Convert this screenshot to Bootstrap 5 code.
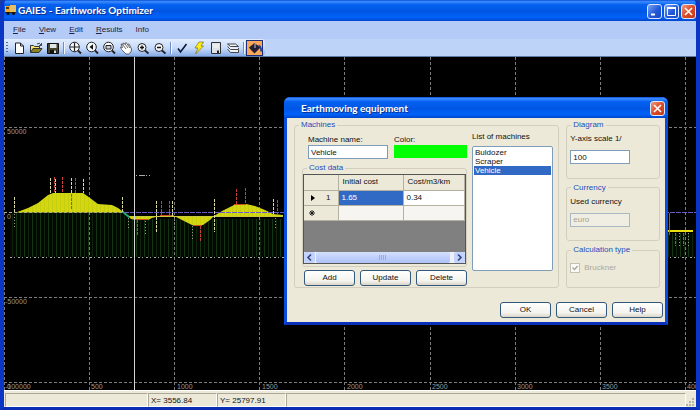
<!DOCTYPE html>
<html lang="en">
<head>
<meta charset="utf-8">
<meta name="viewport" content="width=device-width, initial-scale=1">
<title>GAIES - Earthworks Optimizer</title>
<link href="https://cdn.jsdelivr.net/npm/bootstrap@5.3.0/dist/css/bootstrap.min.css" rel="stylesheet">
<style>
body{font-family:"Liberation Sans",Arial,sans-serif;font-size:8px;line-height:10px;color:#111;background:#1c3f9e}
button,input{font:inherit;color:inherit}
.app-frame{background:#0a3fd0;border:solid #0b35c4;border-width:0 4px 3px 4px;border-radius:6px 6px 0 0;border-bottom-color:#0a2db4}
.xp-title{background:linear-gradient(#0a4fd8 0,#3c8cff 8%,#0561f0 22%,#0056e4 55%,#0062fa 82%,#0046cc 100%);color:#fff;font-family:Lato,"Open Sans",sans-serif;font-weight:700;font-size:10px;line-height:14px}
.app-title{height:21px;margin:0 -4px;padding:3px 4px 0 5px;border-radius:6px 6px 0 0}
.title-text{text-shadow:1px 1px 0 #0a2f90}
.app-title .title-text{margin-left:1px}
.cap-group{gap:2px;margin-top:1px}
.cap-btn{width:15px;height:15px;border:1px solid #dce8ff;border-radius:3px;padding:0;background:linear-gradient(135deg,#7ba4f5,#2258d8 55%,#1c4ac4);display:block}
.cap-btn.shut{background:linear-gradient(135deg,#f09a80,#dd4c26 50%,#c23a16)}
.cap-btn svg{display:block;width:13px;height:13px}
.menu-strip{background:#b4cbf7;height:18px;padding:4px 9px;gap:13px}
.menu-strip a{color:#1b2340;text-decoration:none}
.menu-strip u{text-decoration-thickness:1px;text-underline-offset:1px}
.tool-row{background:#bed3f8;height:18px;border-bottom:1px solid #5f7ba8}
.tool-strip{background:linear-gradient(#e2edfe,#c5d9fa 55%,#86abe6);border-radius:0 4px 4px 0;padding:0 2px 0 1px}
.grip{width:5px;height:12px;background:repeating-linear-gradient(#50699c 0 1px,transparent 1px 3px) 1px 0/2px 100% no-repeat}
.tool-btn{width:17px;height:16px;padding:0;border:1px solid transparent;background:none;display:flex;align-items:center;justify-content:center}
.tool-btn svg{width:14px;height:14px;flex:none}
.tool-btn.on{background:#fba75a;border-color:#1c2f7c}
.tool-sep{width:5px;height:12px;background:linear-gradient(90deg,transparent 2px,#6f8ec4 2px 3px,#f3f8ff 3px 4px,transparent 4px)}
.plot{background:#000;min-height:0}
.plot-svg{width:100%;min-height:0}
.status{background:#ece9d8;height:17px;border-top:1px solid #fff;padding:2px 2px 1px 1px}
.status-cell{border:1px solid;border-color:#aca899 #fff #fff #aca899;height:14px;padding:1px 2px;line-height:11px}
.cell-wide{width:143px}
.cell-pos{width:69px}
.equip{left:280px;top:40px;width:384px;background:#ece9d8;border:solid #0a4be0;border-width:0 3px 3px;border-bottom-color:#0b2fb8;border-radius:6px 6px 0 0}
.equip-title{height:21px;margin:0 -3px;padding:4px 3px 0 17px;border-radius:6px 6px 0 0}
.equip-body{padding:2px 5px 4px 7px}
.panes{gap:7px}
.group{border:1px solid #d2cfbe;border-radius:3px;padding:0;margin:0;min-width:0}
.group legend{float:none;width:auto;font-size:8px;line-height:10px;color:#1a4fbe;margin:0 0 0 4px;padding:0 2px}
.machines{width:266px}
.machines-in{padding:5px 6px 1px 7px;gap:5px}
.left-col{width:166px}
.left-col .group{margin-top:4px}
.side{gap:4px;width:94px}
.side-in{padding:4px 3px}
.xp-field{border:1px solid #7f9db9;border-radius:0;background:#fff;height:14px;padding:0 2px;width:80px;display:block}
.side .xp-field{width:60px;margin-top:6px}
.xp-field:disabled{background:#f0eee2;color:#a5a294;border-color:#a9b9c4}
.swatch{width:73px;height:13px;border:0;padding:0;background:#0f0;display:block}
.names{gap:6px;padding-left:6px}
.lists{width:81px;margin-top:-3px}
.machine-list{border:1px solid #7f9db9;background:#fff;height:125px;margin-top:4px;padding:1px;width:81px;font:inherit;display:block;overflow:hidden;outline:0}
.machine-list option{padding:0 1px;min-height:0;line-height:9px;color:#111}
.machine-list option:checked{background:#316ac5 linear-gradient(#316ac5,#316ac5);color:#fff}
.cost-box{border:1px solid #555;background:#808080;margin:1px 0 2px}
.cost-table{width:100%;table-layout:fixed;border-collapse:collapse;background:#fff}
.cost-table .col-mark{width:34px}
.cost-table .col-initial{width:65px}
.cost-table th,.cost-table td{height:15px;padding:0 3px;border:solid #b4b0a2;border-width:0 1px 1px 0;font-weight:400;line-height:10px;vertical-align:middle}
.cost-table thead th{background:#ece9d8;padding-left:4px}
.cost-table tbody th{background:#ece9d8}
.cost-table td.picked{background:#316ac5;color:#fff}
.cost-table .blank td{background:#f6f5f2}
.hscroll{height:11px;background:#eef0fb;margin-top:31px}
.scroll-btn{width:11px;height:11px;border:0;border-radius:2px;padding:0;background:#c3d3fd;display:block}
.scroll-btn svg{display:block;width:11px;height:11px}
.thumb{background:linear-gradient(#d3dffe,#bccdfb 60%,#aec2f6);border-radius:2px;margin:0 4px 0 1px}
.xp-btn{height:16px;width:51px;border:1px solid #34577c;border-radius:3px;background:linear-gradient(#fff,#f4f3ee 70%,#d9d5c8);padding:0;line-height:12px}
.small-row{gap:5px;margin:3px 0 0 2px}
.foot{gap:5px;margin:14px -3px 0 0}
.tick{appearance:none;width:10px;height:10px;margin:0;border:1px solid #c4c1b2;background:#fbfaf6 url("data:image/svg+xml,%3Csvg xmlns='http://www.w3.org/2000/svg' viewBox='0 0 8 8'%3E%3Cpath d='M1.5 3.5l2 2L6.700 2' fill='none' stroke='%23aaa796' stroke-width='1.400'/%3E%3C/svg%3E")}
.tick-row{gap:4px;color:#aca899;padding-top:4px}
</style>
<script src="https://cdn.jsdelivr.net/npm/bootstrap@5.3.0/dist/js/bootstrap.bundle.min.js"></script>
</head>
<body>
<div class="app-frame vh-100 d-flex flex-column overflow-hidden">
  <header class="xp-title app-title d-flex align-items-start">
    <svg width="12" height="14" viewBox="0 0 12 14"><path d="M0 3h5v6H0z" fill="#f5a623"/><path d="M5 2h6v7H5z" fill="#e9bd62"/><path d="M1 4h3v2H1z" fill="#553c14"/><path d="M0 9h11v1H0z" fill="#3a2505"/><circle cx="3" cy="10.500" r="1.500" fill="#111"/><circle cx="8.500" cy="10.500" r="1.500" fill="#111"/></svg>
    <span class="title-text">GAIES - Earthworks Optimizer</span>
    <div class="cap-group ms-auto d-flex">
      <button class="cap-btn" aria-label="Minimize"><svg viewBox="0 0 13 13"><path d="M3 9.500h4" stroke="#fff" stroke-width="2"/></svg></button>
      <button class="cap-btn" aria-label="Maximize"><svg viewBox="0 0 13 13"><path d="M2.500 3v7.500h8V3" fill="none" stroke="#fff"/><path d="M2 3h9" stroke="#fff" stroke-width="2"/></svg></button>
      <button class="cap-btn shut" aria-label="Close"><svg viewBox="0 0 13 13"><path d="M3 3l7 7M10 3l-7 7" stroke="#fff" stroke-width="1.600"/></svg></button>
    </div>
  </header>
  <nav class="menu-strip d-flex">
    <a href="#"><u>F</u>ile</a><a href="#"><u>V</u>iew</a><a href="#"><u>E</u>dit</a><a href="#"><u>R</u>esults</a><a href="#">Info</a>
  </nav>
  <div class="tool-row d-flex">
    <div class="tool-strip d-flex align-items-center">
      <span class="grip"></span>
      <button class="tool-btn" aria-label="New"><svg viewBox="0 0 14 14"><path d="M3.500 2h5l3 3v7.500h-8z" fill="#fff" stroke="#222"/><path d="M8.500 2v3h3" fill="none" stroke="#222"/></svg></button>
      <button class="tool-btn" aria-label="Open"><svg viewBox="0 0 14 14"><path d="M1.500 11.500v-7h3l1 1h5v2" fill="#f5e36a" stroke="#333"/><path d="M1.500 11.500l2.500-4h9l-3 4z" fill="#8c8420" stroke="#333"/><path d="M8 3q2.500-2 4 1M12.500 2v2.500H10" fill="none" stroke="#222" stroke-width=".8"/></svg></button>
      <button class="tool-btn" aria-label="Save"><svg viewBox="0 0 14 14"><path d="M1.500 2.500h11v10h-11z" fill="#43462c" stroke="#111"/><path d="M4 3h6.500v4H4z" fill="#dfe6e8"/><path d="M4 9h6.500v3.500H4z" fill="#111"/><path d="M8 9.500h2V12H8z" fill="#ddd"/></svg></button>
      <span class="tool-sep"></span>
      <button class="tool-btn" aria-label="Zoom all"><svg viewBox="0 0 14 14"><circle cx="6.500" cy="6" r="4.800" fill="#f5faff" stroke="#222"/><path d="M6.500 1.500v9M2 6h9" stroke="#222" stroke-width="1.200"/><path d="M10 9.500l3 3" stroke="#222" stroke-width="1.800"/></svg></button>
      <button class="tool-btn" aria-label="Zoom previous"><svg viewBox="0 0 14 14"><circle cx="6.500" cy="6" r="4.800" fill="#f5faff" stroke="#222"/><path d="M8 3.300v5.400L4.500 6z" fill="#111"/><path d="M10 9.500l3 3" stroke="#222" stroke-width="1.800"/></svg></button>
      <button class="tool-btn" aria-label="Zoom window"><svg viewBox="0 0 14 14"><circle cx="6.500" cy="6" r="4.800" fill="#f5faff" stroke="#222"/><path d="M4 4.500h5v3.500H4z" fill="#ccd" stroke="#222"/><path d="M10 9.500l3 3" stroke="#222" stroke-width="1.800"/></svg></button>
      <button class="tool-btn" aria-label="Pan"><svg viewBox="0 0 14 14"><path d="M2 3l2 1 0-2 2 1 1-1.500 1.500 2L10 3l2.500 5-.5 3-2.500 2H7L2.500 8.500 1.500 6l2 .5z" fill="#fff" stroke="#444" stroke-width=".8"/><path d="M4 4l3 4M6 3l3 4M8.500 3.500L11 7" stroke="#444" stroke-width=".8"/></svg></button>
      <button class="tool-btn" aria-label="Zoom in"><svg viewBox="0 0 14 14"><circle cx="6" cy="6.500" r="4" fill="#f5faff" stroke="#222"/><path d="M6 4.500v4M4 6.500h4" stroke="#111" stroke-width="1.400"/><path d="M9 9.500l3.500 3" stroke="#222" stroke-width="1.800"/></svg></button>
      <button class="tool-btn" aria-label="Zoom out"><svg viewBox="0 0 14 14"><circle cx="6" cy="6.500" r="4" fill="#f5faff" stroke="#222"/><path d="M4 6.500h4" stroke="#111" stroke-width="1.400"/><path d="M9 9.500l3.500 3" stroke="#222" stroke-width="1.800"/></svg></button>
      <span class="tool-sep"></span>
      <button class="tool-btn" aria-label="Check"><svg viewBox="0 0 14 14"><path d="M3 7.500l2.500 3.500L11.500 3" fill="none" stroke="#0c1630" stroke-width="1.600"/></svg></button>
      <button class="tool-btn" aria-label="Calculate"><svg viewBox="0 0 14 14"><path d="M7 1h4.500L9 5h2.500L3.500 13l2.500-6H3z" fill="#ffee1a" stroke="#77701c" stroke-width=".7"/></svg></button>
      <button class="tool-btn" aria-label="Sheet"><svg viewBox="0 0 14 14"><path d="M2.500 1.500h9v11h-9z" fill="#dde2e8" stroke="#333"/><path d="M8 9.500h2V12H8z" fill="#222"/><path d="M4 4h6M4 6h6" stroke="#f8f8f8"/></svg></button>
      <button class="tool-btn" aria-label="Layers"><svg viewBox="0 0 14 14"><path d="M1.500 3h8l3 2.500h-8zM1.500 5.500l3 3h8V7M1.500 8l3 3.500h8V9" fill="#eef2f6" stroke="#333" stroke-width=".9"/></svg></button>
      <span class="tool-sep"></span>
      <button class="tool-btn on" aria-label="Equipment"><svg viewBox="0 0 14 14"><path d="M1 6.500L6.500 2l6 4.500-6 6L3 9z" fill="#251e30"/><path d="M7 7V2.500" stroke="#c8c4d0"/><path d="M10.500 4.500q3 1 2.500 6" fill="none" stroke="#2a3e96" stroke-width="1.800"/></svg></button>
    </div>
  </div>
  <main class="plot flex-fill d-flex position-relative">
    <svg class="plot-svg" viewBox="4 57 692 333" preserveAspectRatio="xMinYMin slice" role="img" aria-label="Mass haul diagram">
      <defs>
        <pattern id="hatch" x="8" y="0" width="8" height="8" patternUnits="userSpaceOnUse"><path d="M.5 0v8" stroke="#123512"/><path d="M4.500 0v8" stroke="#0e230c"/></pattern>
        <pattern id="soil" width="4" height="4" patternUnits="userSpaceOnUse"><path d="M0 0h4v4H0z" fill="#d6d60e"/><path d="M.5 0v4" stroke="#c6d010"/></pattern>
      </defs>
      <path d="M10 213h114l12 6h147v38H10zM668 233h26v24h-26z" fill="#040904"/>
      <path d="M10 213h114l12 6h147v38H10zM668 233h26v24h-26z" fill="url(#hatch)"/>
      <g stroke="#7c7c7c" stroke-dasharray="3 2" fill="none">
        <path d="M4.500 57v333M89.500 57v333M174.500 57v333M259.500 57v333M344.500 57v333M430.500 57v333M515.500 57v333M600.500 57v333M685.500 57v333"/>
        <path d="M4 127.500h692M4 297.500h692M4 382.500h692"/>
      </g>
      <path d="M10 257.500h686" stroke="#aaa" stroke-dasharray="2 2 1 3"/>
      <path d="M16 212.500L28 208 38 203 48 195 53 193H83L90 198 98 204 112 205 118 208 124 212.500z" fill="url(#soil)"/>
      <path d="M128 216h32l-8 2-4 2h-12l-5-1zM174 216h40l-4 4-7 5h-11l-6-3zM214 216l8-5 12-6 12-1 9 2 10 4 8 4 10 1v2z" fill="url(#soil)"/>
      <path d="M128 216.500h155" stroke="#c9c93c"/>
      <path d="M134 219.500h14M193 225.500h9M160 215.500h14M234 204.500h12" stroke="#d0501c"/>
      <path d="M122 211l7 6" stroke="#18b070" stroke-width="2"/>
      <path d="M4 212.500h120" stroke="#a9a98a" stroke-dasharray="3 2"/>
      <path d="M124 212.500h572" stroke="#6b5cc0" stroke-dasharray="5 1"/>
      <path d="M668 231h25" stroke="#ece010" stroke-width="2"/>
      <path d="M669.500 213v22" stroke="#3f74b8"/>
      <g stroke="#d8d8a0" stroke-dasharray="3 1">
        <path d="M14.500 197v15M50.500 178v15M55.500 179v14M71.500 178v15M83.500 179v14M122.500 197v15M156.500 201v31M172.500 201v15M214.500 199v33M273.500 199v16"/>
      </g>
      <g stroke="#c8403a" stroke-dasharray="3 1">
        <path d="M54.500 177v16M62.500 177v16M75.500 178v15M71.500 194v15M161.500 201v14M169.500 201v14M236.500 189v15M245.500 188v16M277.500 200v15M137.500 220v15M200.500 226v15M675.500 233v13M683.500 233v13"/>
      </g>
      <g stroke="#98988c" stroke-dasharray="1 2">
        <path d="M14.500 214v13M128.500 218v12M145.500 221v14M192.500 226v13M275.500 218v10M679.500 233v13M688.500 233v13M174.500 217v12"/>
      </g>
      <path d="M136 175.500h14" stroke="#aaa" stroke-dasharray="1 2 6 1"/>
      <path d="M134.500 57v333" stroke="#d4d4d4"/>
      <g fill="#999" font-size="7">
        <text x="7" y="134">50000</text><text x="7" y="219">0</text><text x="5" y="304">-50000</text><text x="5" y="389">-100000</text>
        <text x="7" y="389">0</text><text x="91" y="389">500</text><text x="177" y="389">1000</text><text x="262" y="389">1500</text><text x="347" y="389">2000</text><text x="432" y="389">2500</text><text x="517" y="389">3000</text><text x="602" y="389">3500</text><text x="687" y="389">4000</text>
      </g>
    </svg>
    <section class="equip position-absolute" role="dialog" aria-labelledby="equip-name">
      <div class="xp-title equip-title d-flex justify-content-between">
        <span class="title-text" id="equip-name">Earthmoving equipment</span>
        <button class="cap-btn shut" aria-label="Close"><svg viewBox="0 0 13 13"><path d="M3 3l7 7M10 3l-7 7" stroke="#fff" stroke-width="1.600"/></svg></button>
      </div>
      <form class="equip-body">
        <div class="panes d-flex">
          <fieldset class="group machines">
            <legend>Machines</legend>
            <div class="machines-in d-flex">
              <div class="left-col">
                <div class="names d-flex">
                  <div><label class="d-block" for="mname">Machine name:</label><input class="xp-field" id="mname" value="Vehicle"></div>
                  <div><label class="d-block" for="mcolor">Color:</label><button type="button" class="swatch" id="mcolor" aria-label="Green"></button></div>
                </div>
                <fieldset class="group">
                  <legend>Cost data</legend>
                  <div class="cost-box">
                    <table class="cost-table">
                      <colgroup><col class="col-mark"><col class="col-initial"><col></colgroup>
                      <thead><tr><th></th><th scope="col">Initial cost</th><th scope="col">Cost/m3/km</th></tr></thead>
                      <tbody>
                        <tr><th scope="row"><span class="d-flex align-items-center justify-content-between px-1"><svg width="4" height="6" viewBox="0 0 4 6"><path d="M0 0l4 3-4 3z"/></svg>1</span></th><td class="picked">1.65</td><td>0.34</td></tr>
                        <tr class="blank"><th><svg class="d-block" width="10" height="8" viewBox="0 0 10 8"><path d="M5 1v6M2 4h6M3 2l4 4M7 2L3 6" stroke="#111" stroke-width=".9"/></svg></th><td></td><td></td></tr>
                      </tbody>
                    </table>
                    <div class="hscroll d-flex">
                      <button type="button" class="scroll-btn" aria-label="Scroll left"><svg viewBox="0 0 11 11"><path d="M7 2.500l-3 3 3 3" fill="none" stroke="#30457c" stroke-width="1.600"/></svg></button>
                      <div class="thumb flex-fill d-flex justify-content-center align-items-center"><svg width="8" height="5" viewBox="0 0 8 5"><path d="M.5 0v5M2.500 0v5M4.500 0v5M6.500 0v5" stroke="#93abe8"/></svg></div>
                      <button type="button" class="scroll-btn" aria-label="Scroll right"><svg viewBox="0 0 11 11"><path d="M4 2.500l3 3-3 3" fill="none" stroke="#30457c" stroke-width="1.600"/></svg></button>
                    </div>
                  </div>
                </fieldset>
                <div class="small-row d-flex">
                  <button type="button" class="xp-btn">Add</button><button type="button" class="xp-btn">Update</button><button type="button" class="xp-btn">Delete</button>
                </div>
              </div>
              <div class="lists">
                <label class="d-block" for="mlist">List of machines</label>
                <select class="machine-list" id="mlist" size="8"><option>Buldozer</option><option>Scraper</option><option selected>Vehicle</option></select>
              </div>
            </div>
          </fieldset>
          <div class="side d-flex flex-column">
            <fieldset class="group flex-fill"><legend>Diagram</legend><div class="side-in"><label class="d-block" for="yscale">Y-axis scale 1/</label><input class="xp-field" id="yscale" value="100"></div></fieldset>
            <fieldset class="group flex-fill"><legend>Currency</legend><div class="side-in"><label class="d-block" for="cur">Used currency</label><input class="xp-field" id="cur" value="euro" disabled></div></fieldset>
            <fieldset class="group flex-fill"><legend>Calculation type</legend><div class="side-in"><div class="tick-row d-flex align-items-center"><input class="tick" type="checkbox" id="bru" checked disabled><label for="bru">Bruckner</label></div></div></fieldset>
          </div>
        </div>
        <div class="foot d-flex justify-content-end">
          <button type="button" class="xp-btn">OK</button><button type="button" class="xp-btn">Cancel</button><button type="button" class="xp-btn">Help</button>
        </div>
      </form>
    </section>
  </main>
  <footer class="status d-flex">
    <div class="status-cell cell-wide"></div>
    <div class="status-cell cell-pos">X= 3556.84</div>
    <div class="status-cell cell-pos">Y= 25797.91</div>
    <div class="status-cell flex-fill"></div>
    <svg width="8" height="8" viewBox="0 0 8 8" class="align-self-end"><path d="M6 0h2v2H6zM3 3h2v2H3zM6 3h2v2H6zM0 6h2v2H0zM3 6h2v2H3zM6 6h2v2H6z" fill="#b8b4a2"/></svg>
  </footer>
</div>
</body>
</html>
